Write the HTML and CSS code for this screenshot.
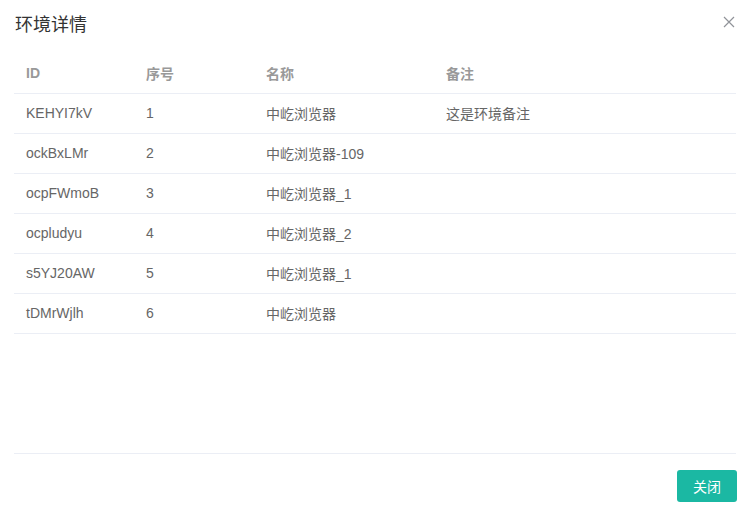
FILE: index.html
```html
<!DOCTYPE html>
<html lang="zh-CN">
<head>
<meta charset="utf-8">
<link rel="stylesheet" href="styles.css">
</head>
<body>
<div class="dialog">
  <div class="dialog-header">
    <span class="dialog-title">环境详情</span>
    <button class="close-btn" aria-label="close">
      <svg width="12" height="12" viewBox="0 0 12 12"><path d="M1 1L11 11M11 1L1 11" stroke="#909399" stroke-width="1.2" fill="none"/></svg>
    </button>
  </div>
  <div class="dialog-body">
    <table class="env-table">
      <colgroup>
        <col class="c-id"><col class="c-no"><col class="c-name"><col>
      </colgroup>
      <thead>
        <tr><th>ID</th><th>序号</th><th>名称</th><th>备注</th></tr>
      </thead>
      <tbody>
        <tr><td>KEHYI7kV</td><td>1</td><td>中屹浏览器</td><td>这是环境备注</td></tr>
        <tr><td>ockBxLMr</td><td>2</td><td>中屹浏览器-109</td><td></td></tr>
        <tr><td>ocpFWmoB</td><td>3</td><td>中屹浏览器_1</td><td></td></tr>
        <tr><td>ocpludyu</td><td>4</td><td>中屹浏览器_2</td><td></td></tr>
        <tr><td>s5YJ20AW</td><td>5</td><td>中屹浏览器_1</td><td></td></tr>
        <tr><td>tDMrWjlh</td><td>6</td><td>中屹浏览器</td><td></td></tr>
      </tbody>
    </table>
  </div>
  <div class="dialog-footer">
    <button class="btn-primary">关闭</button>
  </div>
</div>
</body>
</html>
```
FILE: styles.css
```css
* { box-sizing: border-box; }
html, body { margin: 0; padding: 0; background: #fff; }
body {
  font-family: "Liberation Sans", "Noto Sans CJK SC", sans-serif;
  color: #666;
  width: 748px;
  height: 510px;
}
.dialog { padding: 0 11px 0 14px; }
.dialog-header {
  display: flex;
  justify-content: space-between;
  align-items: flex-start;
  height: 53px;
  padding-top: 13px;
}
.dialog-title {
  font-size: 18px;
  line-height: 24px;
  color: #333;
  padding-left: 1px;
}
.close-btn {
  border: 0;
  background: none;
  padding: 0;
  margin-top: 3px;
  margin-right: 2px;
  width: 12px;
  height: 12px;
  display: flex;
  cursor: pointer;
}
.dialog-body {
  height: 401px;
  border-bottom: 1px solid #ebeef5;
  margin-right: 1px;
}
.env-table {
  width: 100%;
  border-collapse: collapse;
  table-layout: fixed;
  font-size: 14px;
}
.c-id { width: 120px; }
.c-no { width: 120px; }
.c-name { width: 180px; }
.env-table th, .env-table td {
  height: 40px;
  padding: 0 12px;
  text-align: left;
  border-bottom: 1px solid #ebeef5;
  white-space: nowrap;
}
.env-table th {
  color: #999;
  font-weight: bold;
}
.env-table td { color: #666; }
.dialog-footer {
  display: flex;
  justify-content: flex-end;
  padding-top: 16px;
}
.btn-primary {
  width: 60px;
  height: 32px;
  border: 0;
  border-radius: 3px;
  background: #1bb8a3;
  color: #fff;
  font-family: "Noto Sans CJK SC", sans-serif;
  font-size: 14px;
  padding: 0;
}
```
